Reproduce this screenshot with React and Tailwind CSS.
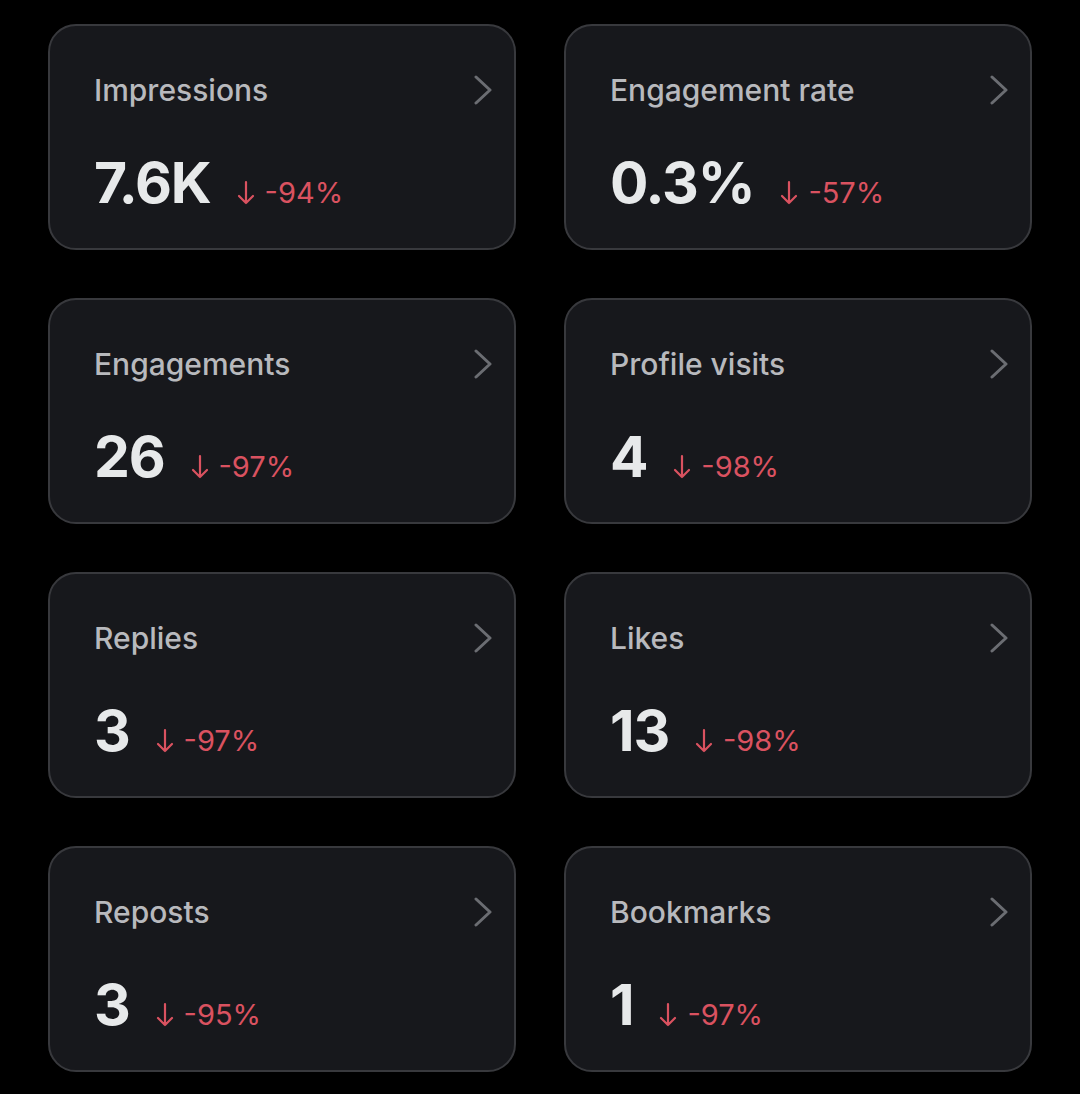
const stats = [
  { label: 'Impressions', value: '7.6K', change: '-94%' },
  { label: 'Engagement rate', value: '0.3%', change: '-57%' },
  { label: 'Engagements', value: '26', change: '-97%' },
  { label: 'Profile visits', value: '4', change: '-98%' },
  { label: 'Replies', value: '3', change: '-97%' },
  { label: 'Likes', value: '13', change: '-98%' },
  { label: 'Reposts', value: '3', change: '-95%' },
  { label: 'Bookmarks', value: '1', change: '-97%' },
];

function Chevron() {
  return (
    <svg width="20" height="30" viewBox="0 0 20 30" fill="none" className="shrink-0">
      <path d="M3 2 L17 15 L3 28" stroke="#6b6d72" strokeWidth="3" strokeLinecap="round" strokeLinejoin="round" />
    </svg>
  );
}

function DownArrow() {
  return (
    <svg width="18" height="26" viewBox="0 0 18 26" fill="none" className="shrink-0">
      <path d="M9 2 V23 M2 16 L9 23 L16 16" stroke="#da5260" strokeWidth="2.2" strokeLinecap="round" strokeLinejoin="round" />
    </svg>
  );
}

function StatCard({ label, value, change }) {
  return (
    <div className="h-[226px] rounded-[28px] border-2 border-[#38393d] bg-[#17181c] pl-[44px] pr-[21px] pt-[46px]">
      <div className="flex items-center justify-between">
        <span className="text-[30px] leading-[36px] font-medium text-[#b8b9bd]">{label}</span>
        <Chevron />
      </div>
      <div className="mt-[47px] flex items-baseline gap-[26px]">
        <span className="text-[57px] leading-[56px] font-bold tracking-[-1.2px] text-[#e7e9ea]">{value}</span>
        <span className="flex items-baseline gap-[10px] text-[29px] leading-[30px] text-[#da5260]">
          <span className="self-end pb-[2px]"><DownArrow /></span>
          {change}
        </span>
      </div>
    </div>
  );
}

export default function App() {
  return (
    <div className="min-h-[1094px] w-[1080px] bg-black px-[48px] pt-[24px] font-['Inter',sans-serif]">
      <div className="grid grid-cols-2 gap-x-[48px] gap-y-[48px]">
        {stats.map((s) => (
          <StatCard key={s.label} {...s} />
        ))}
      </div>
    </div>
  );
}
